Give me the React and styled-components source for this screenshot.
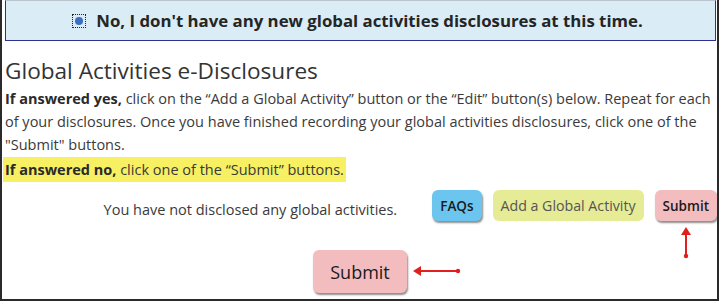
import React from 'react';
import styled, { createGlobalStyle } from 'styled-components';

const GlobalStyle = createGlobalStyle`
    html, body {
        margin: 0;
        padding: 0;
        background: #ffffff;
    }

    body {
        font-family: "Open Sans", "Liberation Sans", sans-serif;
        color: #3a3a3a;
    }
`;

const Frame = styled.div`
    box-sizing: border-box;
    width: 719px;
    height: 301px;
    border-left: 2px solid #2a2a2a;
    border-right: 2px solid #2a2a2a;
    border-bottom: 2px solid #2a2a2a;
    position: relative;
    overflow: hidden;
`;

const Banner = styled.div`
    box-sizing: border-box;
    height: 41px;
    margin: 0 1px 0 3px;
    background: #daecf6;
    border: 1px solid #2e3192;
    border-top: 1px solid #b9c4cc;
    display: flex;
    align-items: center;
    justify-content: center;
    gap: 10px;
    padding-right: 6px;
    font-size: 16.8px;
    font-weight: 700;
    color: #252525;
`;

const FocusBox = styled.span`
    box-sizing: border-box;
    width: 14px;
    height: 14px;
    border: 1px dotted #222;
    display: inline-flex;
    align-items: center;
    justify-content: center;

    &::after {
        content: '';
        width: 8px;
        height: 8px;
        border-radius: 50%;
        background: #3c6fc4;
    }
`;

const Content = styled.section`
    padding: 0 0 0 3px;
`;

const Title = styled.h1`
    margin: 15px 0 0 0;
    font-size: 22.6px;
    font-weight: 400;
    line-height: 30px;
    color: #333;
`;

const Text = styled.p`
    margin: 1px 0 0 0;
    font-size: 14.5px;
    line-height: 23px;
    color: #3a3a3a;

    b {
        font-weight: 700;
        color: #2a2a2a;
    }
`;

const Highlight = styled.div`
    display: inline-block;
    margin: 1px 0 0 -2px;
    padding: 1px 2px 1px 2px;
    background: #f7f063;
    font-size: 14.5px;
    line-height: 23px;

    b {
        font-weight: 700;
        color: #2a2a2a;
    }
`;

const Actions = styled.div`
    display: flex;
    align-items: flex-end;
    justify-content: flex-end;
    gap: 11px;
    margin-top: 8px;
`;

const Empty = styled.span`
    font-size: 14.5px;
    line-height: 22px;
    margin-right: 24px;
    color: #3a3a3a;
`;

const Button = styled.button`
    box-sizing: border-box;
    height: ${p => p.$big ? '43px' : '31px'};
    padding: 0 ${p => p.$big ? '17px' : '8px'};
    border: none;
    border-radius: 6px;
    background: ${p => p.$bg};
    color: ${p => p.$color || '#1a1a1a'};
    font-family: inherit;
    font-size: ${p => p.$big ? '18px' : p.$size || '13.5px'};
    font-weight: ${p => p.$weight || 600};
    box-shadow: ${p => p.$flat ? 'none' : '1px 2px 2px rgba(0,0,0,0.45)'};
    cursor: pointer;
`;

const BigRow = styled.div`
    display: flex;
    justify-content: center;
    margin-top: 29px;
    padding-right: 2px;
`;

const Arrow = styled.svg`
    position: absolute;
    overflow: visible;
`;

export default function App() {
    return (
        <>
            <GlobalStyle />
            <Frame>
                <Banner>
                    <FocusBox />
                    <span>No, I don't have any new global activities disclosures at this time.</span>
                </Banner>
                <Content>
                    <Title>Global Activities e-Disclosures</Title>
                    <Text>
                        <b>If answered yes,</b> click on the “Add a Global Activity” button or the “Edit” button(s) below. Repeat for each of your disclosures. Once you have finished recording your global activities disclosures, click one of the "Submit" buttons.
                    </Text>
                    <Highlight>
                        <b>If answered no,</b> click one of the “Submit” buttons.
                    </Highlight>
                    <Actions>
                        <Empty>You have not disclosed any global activities.</Empty>
                        <Button $bg="#6cc5ef">FAQs</Button>
                        <Button $bg="#e6eb95" $color="#555" $weight={400} $size="14.2px" $flat>Add a Global Activity</Button>
                        <Button $bg="#f3bdc0">Submit</Button>
                    </Actions>
                    <BigRow>
                        <Button $bg="#f3bdc0" $big $weight={500}>Submit</Button>
                    </BigRow>
                </Content>
                <Arrow style={{ left: 678, top: 226 }} width="12" height="34" viewBox="0 0 12 34">
                    <line x1="6" y1="6" x2="6" y2="30" stroke="#e0201e" strokeWidth="2" />
                    <path d="M1 9 L6 1 L11 9 Z" fill="#e0201e" />
                    <circle cx="6" cy="30" r="2.2" fill="#e0201e" />
                </Arrow>
                <Arrow style={{ left: 410, top: 265 }} width="50" height="12" viewBox="0 0 50 12">
                    <line x1="6" y1="6" x2="46" y2="6" stroke="#e0201e" strokeWidth="2" />
                    <path d="M9 1 L1 6 L9 11 Z" fill="#e0201e" />
                    <circle cx="46" cy="6" r="2.2" fill="#e0201e" />
                </Arrow>
            </Frame>
        </>
    );
}
